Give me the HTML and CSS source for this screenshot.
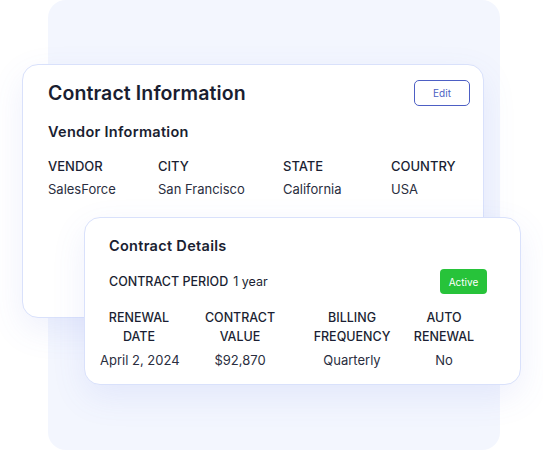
FILE: index.html
```html
<!DOCTYPE html>
<html>
<head>
<meta charset="utf-8">
<link rel="stylesheet" href="styles.css">
</head>
<body>
<div class="panel">
  <section class="card card-info">
    <div class="info-head">
      <h1 class="title">Contract Information</h1>
      <button class="edit-btn">Edit</button>
    </div>
    <h2 class="subtitle">Vendor Information</h2>
    <div class="vendor-grid">
      <div class="label">VENDOR</div>
      <div class="label">CITY</div>
      <div class="label">STATE</div>
      <div class="label">COUNTRY</div>
      <div class="value">SalesForce</div>
      <div class="value">San Francisco</div>
      <div class="value">California</div>
      <div class="value">USA</div>
    </div>
  </section>
  <section class="card card-details">
    <h2 class="subtitle">Contract Details</h2>
    <div class="period-row">
      <div class="period"><span class="period-label">CONTRACT PERIOD</span><span class="period-value">1 year</span></div>
      <span class="badge">Active</span>
    </div>
    <div class="details-grid">
      <div class="dcell">
        <div class="dlabel">RENEWAL<br>DATE</div>
        <div class="dvalue">April 2, 2024</div>
      </div>
      <div class="dcell">
        <div class="dlabel">CONTRACT<br>VALUE</div>
        <div class="dvalue">$92,870</div>
      </div>
      <div class="dcell">
        <div class="dlabel">BILLING<br>FREQUENCY</div>
        <div class="dvalue">Quarterly</div>
      </div>
      <div class="dcell">
        <div class="dlabel">AUTO<br>RENEWAL</div>
        <div class="dvalue">No</div>
      </div>
    </div>
  </section>
</div>
</body>
</html>
```
FILE: styles.css
```css
html, body {
  margin: 0;
  padding: 0;
  background: #ffffff;
}
body {
  font-family: "Inter", "Open Sans", "Liberation Sans", sans-serif;
  color: #1b1f33;
  width: 543px;
  height: 450px;
  overflow: hidden;
}
.panel {
  margin-left: 48px;
  width: 452px;
  height: 450px;
  box-sizing: border-box;
  padding-top: 64px;
  background: #f3f6fe;
  border-radius: 18px;
}
.card {
  box-sizing: border-box;
  background: #ffffff;
  border: 1px solid #d9e1fb;
  border-radius: 16px;
  box-shadow: 0 12px 34px rgba(92, 112, 230, 0.10);
}
.card-info {
  margin-left: -26px;
  width: 462px;
  height: 254px;
  padding: 14px 13px 0 25px;
}
.info-head {
  display: flex;
  justify-content: space-between;
  align-items: flex-start;
}
.title {
  margin: 0;
  margin-top: 2px;
  font-size: 19.5px;
  line-height: 24px;
  font-weight: 600;
  color: #1a1e31;
  letter-spacing: 0.1px;
}
.edit-btn {
  margin-top: 1px;
  width: 56px;
  height: 26px;
  box-sizing: border-box;
  border: 1px solid #4d5fc4;
  border-radius: 5px;
  background: #ffffff;
  color: #4d5fc4;
  font-family: inherit;
  font-size: 10px;
  padding: 0;
}
.subtitle {
  margin: 0;
  font-size: 14.5px;
  line-height: 20px;
  font-weight: 600;
  color: #1a1e31;
  letter-spacing: 0.3px;
}
.card-info .subtitle {
  margin-top: 16px;
}
.vendor-grid {
  margin-top: 16px;
  display: grid;
  grid-template-columns: 110px 125px 108px auto;
  row-gap: 7px;
}
.label {
  font-size: 13px;
  line-height: 16px;
  font-weight: 500;
  color: #1b1f33;
}
.value {
  font-size: 13px;
  line-height: 16px;
  font-weight: 400;
  color: #2a2e40;
}
.card-details {
  position: relative;
  margin-top: -101px;
  margin-left: 36px;
  width: 437px;
  height: 168px;
  padding: 18px 33px 0 24px;
}
.period-row {
  margin-top: 13px;
  display: flex;
  justify-content: space-between;
  align-items: center;
}
.period {
  font-size: 12.5px;
  line-height: 16px;
  color: #1b1f33;
}
.period-label {
  font-weight: 500;
  margin-right: 5px;
}
.badge {
  display: inline-flex;
  align-items: center;
  justify-content: center;
  width: 47px;
  height: 25px;
  border-radius: 4px;
  background: #27c33a;
  color: #ffffff;
  font-size: 10px;
}
.details-grid {
  margin-top: 14px;
  margin-left: -9px;
  display: grid;
  grid-template-columns: 78px 124px 100px 84px;
}
.dcell {
  text-align: center;
  white-space: nowrap;
}
.dlabel {
  font-size: 12.5px;
  line-height: 19px;
  font-weight: 500;
  color: #1b1f33;
}
.dvalue {
  margin-top: 6px;
  font-size: 13px;
  line-height: 16px;
  color: #2a2e40;
}
```
